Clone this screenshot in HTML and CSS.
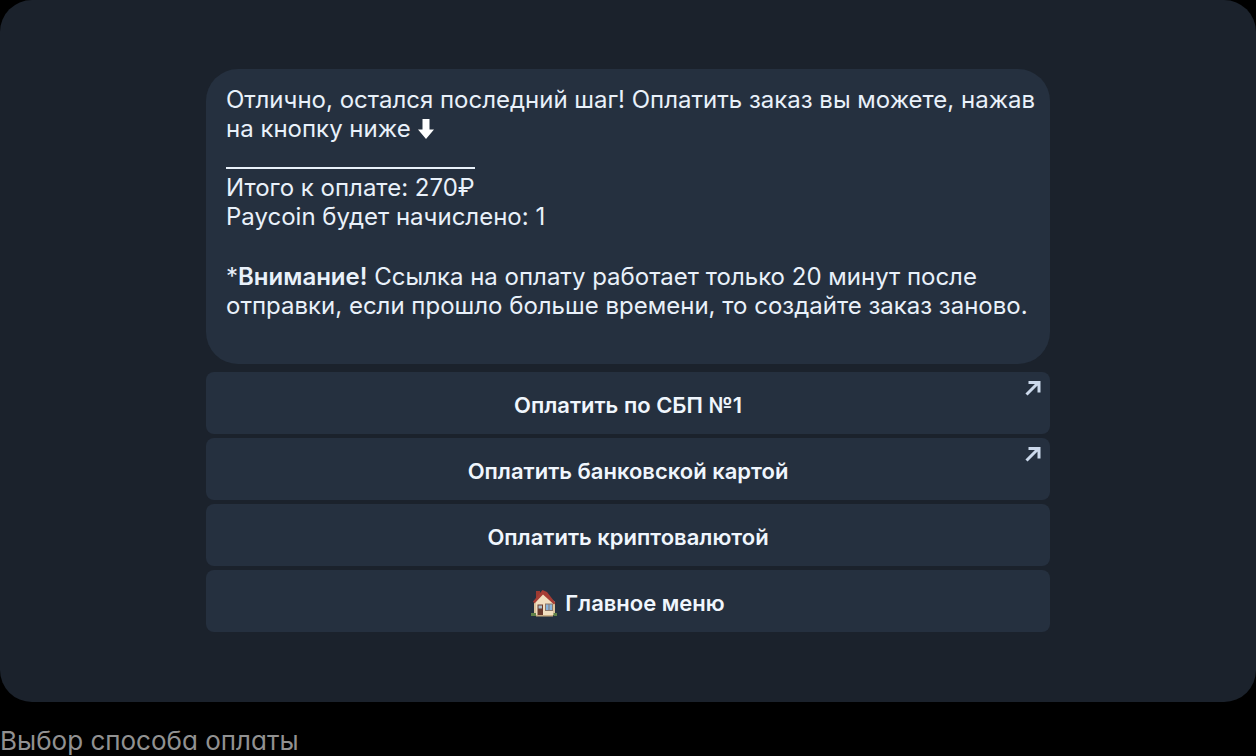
FILE: index.html
```html
<!DOCTYPE html>
<html lang="ru">
<head>
<meta charset="utf-8">
<meta name="viewport" content="width=device-width, initial-scale=1">
<title>Выбор способа оплаты</title>
<link rel="stylesheet" href="styles.css">
</head>
<body>
<figure class="figure">
  <main class="screen">
    <div class="chat">
      <section class="message">
        <p class="text">Отлично, остался последний шаг! Оплатить заказ вы можете, нажав на кнопку ниже <svg class="down" viewBox="0 0 18 22" aria-hidden="true"><path d="M5.500 1h7v10.500h4.500L9 21 1 11.500h4.500z"/></svg></p>
        <div class="total">
          <p class="text">Итого к оплате: 270₽</p>
        </div>
        <p class="text">Paycoin будет начислено: 1</p>
        <p class="text note">*<strong>Внимание!</strong> Ссылка на оплату работает только 20 минут после отправки, если прошло больше времени, то создайте заказ заново.</p>
      </section>
      <div class="keyboard">
        <button class="key" type="button">Оплатить по СБП №1
          <svg class="link-mark" viewBox="0 0 16 16" aria-hidden="true"><path d="M1.500 14.500 13 3M3.500 2.500h10.500v10"/></svg></button>
        <button class="key" type="button">Оплатить банковской картой
          <svg class="link-mark" viewBox="0 0 16 16" aria-hidden="true"><path d="M1.500 14.500 13 3M3.500 2.500h10.500v10"/></svg></button>
        <button class="key" type="button">Оплатить криптовалютой</button>
        <button class="key" type="button">
          <svg class="house" viewBox="0 0 26 28" aria-hidden="true">
            <path fill="#9c3a31" d="M5 2h4v7H5z"/>
            <path fill="#f1dfc0" d="M3 13 12 4l12 9v13H3z"/>
            <path fill="#dcc39d" d="M3 13h2v13H3zM22 13h2v13h-2z"/>
            <path fill="#a63d35" d="M11.500 1 2 12.500l1.500 2L12 5.500l11 10 1.500-1.500L16 3z"/>
            <path fill="#6b3a2c" d="M6.500 15.500H12V26H6.500z"/>
            <path fill="#a9beca" d="M7.500 16.500H11v3H7.500z"/>
            <path fill="#8a776b" d="M14 14.500h8V22h-8z"/>
            <path fill="#86b4dc" d="M15 15.500h2.500V21H15zM18.500 15.500H21V21h-2.500z"/>
            <path fill="#618248" d="M0 24h5v3H0zM22.500 24H26v3h-3.500z"/>
            <path fill="#c9ac83" d="M5 26h17v1.500H5z"/>
          </svg>Главное меню</button>
      </div>
    </div>
  </main>
  <figcaption class="caption">Выбор способа оплаты</figcaption>
</figure>
</body>
</html>
```
FILE: styles.css
```css
* { box-sizing: border-box; }

body {
  margin: 0;
  background: #000;
  color: #e9f1fa;
  font-family: Inter, "Noto Sans", sans-serif;
  overflow-x: hidden;
}

.figure { margin: 0; }

.screen {
  padding: 69px 16px 70px;
  border-radius: 32px;
  background: #1b222c;
}

.chat {
  display: flex;
  flex-direction: column;
  gap: 8px;
  max-width: 844px;
  margin: 0 auto;
}

.message {
  padding: 16px 12px 44px 20px;
  border-radius: 32px;
  background: #25303f;
}

.text {
  margin: 0;
  font-size: 24px;
  line-height: 29px;
}

.total {
  width: fit-content;
  margin-top: 24px;
  padding-top: 4px;
  border-top: 2px solid #e9f1fa;
}

.note { margin-top: 31px; }

.note strong { font-weight: 600; }

.down {
  width: 18px;
  height: 22px;
  vertical-align: -3px;
  fill: #fff;
}

.keyboard {
  display: flex;
  flex-direction: column;
  gap: 4px;
}

.key {
  position: relative;
  display: flex;
  align-items: center;
  justify-content: center;
  gap: 8px;
  min-height: 62px;
  padding: 18px 40px 14px;
  border: 0;
  border-radius: 8px;
  background: #25303f;
  color: #f0f6fd;
  font-family: inherit;
  font-size: 22px;
  font-weight: 600;
  line-height: 30px;
  cursor: pointer;
}

.link-mark {
  position: absolute;
  top: 8px;
  right: 9px;
  width: 16px;
  height: 16px;
  fill: none;
  stroke: #ccd9ec;
  stroke-width: 3;
}

.house {
  width: 26px;
  height: 28px;
}

.caption {
  padding-top: 24px;
  color: #919191;
  font-size: 26px;
  line-height: 30px;
  font-feature-settings: "cv11";
}
```
